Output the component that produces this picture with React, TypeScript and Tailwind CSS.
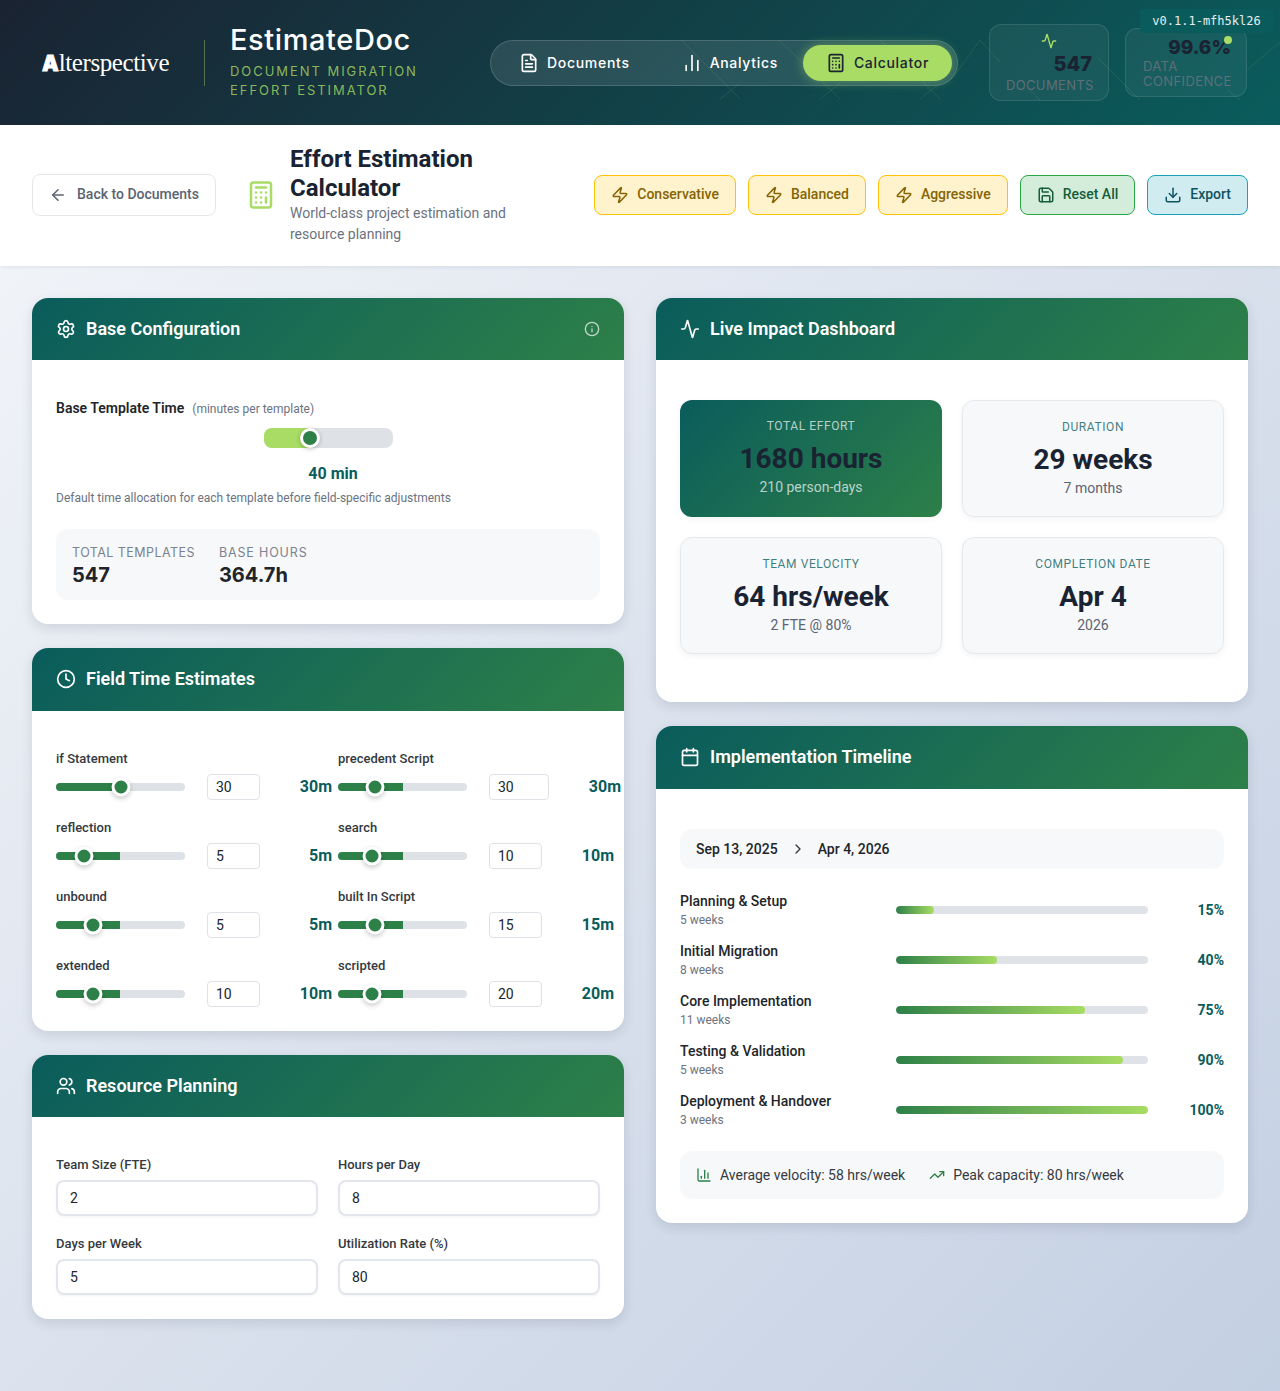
import React from "react";
import {
  Activity, ArrowLeft, Calculator, Calendar, ChartColumn, ChartNoAxesColumn, ChevronRight, Clock, Download, FileText,
  Info, Save, Settings, TrendingUp, Users, Zap,
} from "lucide-react";

function Card({ icon, title, info, headClass, children }: { icon: React.ReactNode; title: string; info?: boolean; headClass: string; children: React.ReactNode }) {
  return (
    <section className="rounded-2xl bg-white overflow-hidden shadow-[0_4px_12px_rgba(26,35,50,0.12)]">
      <div className={`flex items-center justify-between px-6 bg-[linear-gradient(135deg,#0a5c5c_0%,#2d8048_100%)] text-white ${headClass}`}>
        <div className="flex items-center gap-[10px]">
          {icon}
          <h2 className="text-[18px] font-semibold leading-6">{title}</h2>
        </div>
        {info && <Info size={16} className="text-white/70" />}
      </div>
      {children}
    </section>
  );
}

function FieldRow({ label, left, input, value, wide, right }: { label: string; left: number; input: string; value: string; wide?: boolean; right?: boolean }) {
  return (
    <div className="min-w-0">
      <div className="h-5 leading-5 text-[13px] font-medium text-[#343a40] mb-[5px]">{label}</div>
      <div className="flex items-center gap-[22px] h-[26px] w-max">
        <div className="relative w-[129px] h-2 rounded-full bg-[#dee2e6]">
          <div className={`h-2 ${right ? "w-[65px]" : "w-[64px]"} rounded-l-full bg-[#2d8048]`} />
          <span
            className="absolute top-1/2 w-[19px] h-[19px] -translate-x-1/2 -translate-y-1/2 rounded-full bg-[#2d8048] border-[3px] border-white shadow-[0_2px_5px_rgba(0,0,0,0.22)]"
            style={{ left }}
          />
        </div>
        <div className={`${wide ? "w-[60px]" : "w-[53px]"} h-[26px] rounded border border-[#dee2e6] bg-white pl-2 text-[14px] leading-[25px] text-[#212529]`}>{input}</div>
        <div className={`${wide ? "-ml-[7px] w-[57px]" : "w-[50px]"} text-right text-[16px] font-bold text-[#0a5c5c]`}>{value}</div>
      </div>
    </div>
  );
}

function ResField({ label, value }: { label: string; value: string }) {
  return (
    <div>
      <div className="h-5 leading-5 text-[13px] font-medium text-[#343a40] mb-[5px]">{label}</div>
      <div className="h-9 rounded-lg border-2 border-[#e2e6ec] bg-white px-3 text-[14px] leading-8 text-[#212529] shadow-[0_1px_3px_rgba(0,0,0,0.05)]">{value}</div>
    </div>
  );
}

function Stat({ label, value, sub, primary }: { label: string; value: string; sub: string; primary?: boolean }) {
  return (
    <div
      className={`h-[117px] rounded-xl flex flex-col items-center pt-[17px] shadow-[0_2px_6px_rgba(0,0,0,0.05)] ${
        primary
          ? "bg-[linear-gradient(135deg,#0a5c5c_0%,#2d8048_100%)]"
          : "bg-[#f7f8fa] border border-[#e5e8ec]"
      }`}
    >
      <div className={`h-[18px] leading-[18px] text-[12px] tracking-[0.6px] uppercase ${primary ? "text-white/70" : "text-[#0a5c5c]/80"}`}>{label}</div>
      <div className="mt-[6px] h-9 leading-9 text-[28px] font-bold text-[#1a2332]">{value}</div>
      <div className={`h-5 leading-5 text-[14px] ${primary ? "text-white/70" : "text-[#5b6472]"}`}>{sub}</div>
    </div>
  );
}

function Phase({ name, weeks, pct }: { name: string; weeks: string; pct: number }) {
  return (
    <div className="grid grid-cols-[216px_252px_76px] items-center h-[38px]">
      <div>
        <div className="h-5 leading-5 text-[14px] font-medium text-[#212529]">{name}</div>
        <div className="h-[18px] leading-[18px] text-[12px] text-[#6b7280]">{weeks}</div>
      </div>
      <div className="h-2 rounded-full bg-[#dfe3e8] overflow-hidden">
        <div className="h-2 rounded-full bg-[linear-gradient(90deg,#2d8048,#a8dc64)]" style={{ width: `${pct}%` }} />
      </div>
      <div className="text-right text-[14px] font-bold text-[#0a5c5c]">{pct}%</div>
    </div>
  );
}

function ToolBtn({ children, icon, tone }: { children: string; icon: React.ReactNode; tone: string }) {
  return (
    <button className={`h-10 rounded-lg border px-4 flex items-center gap-2 text-[14px] font-medium ${tone}`}>
      {icon}
      {children}
    </button>
  );
}

const amber = "bg-[#fff3cd] border-[#ffc107] text-[#856404]";

export default function App() {
  return (
    <div className="min-h-[1391px] font-[Roboto,sans-serif] bg-[linear-gradient(135deg,#f5f7fa_0%,#c3cfe2_100%)]">
      <header className="relative h-[125px] overflow-hidden bg-[linear-gradient(135deg,#1a2332_0%,#0a5c5c_100%)] px-8 flex items-center font-[Inter,sans-serif]">
        <svg className="absolute inset-0 pointer-events-none" width="1280" height="125" fill="none" stroke="#a8dc64" strokeOpacity="0.17" strokeWidth="0.7">
          <path d="M681 40l59 59M779 40l61 59M880 40l60 59M720 99l20-16M820 99l20-16M920 99l20-16M955 75l25-35M980 40l20 22M1097 57l43 43M1030 90l10 10M1228 90l12 10M1247 70l33-28" />
        </svg>
        <div className="relative flex items-center w-full">
          <div className="ml-[10px] w-[129px] flex items-baseline text-white font-['Liberation_Serif',serif] text-[25px] leading-none tracking-[-0.4px]">
            <span className="font-[Inter,sans-serif] font-black text-[21px] tracking-normal [-webkit-text-stroke:0.8px_white]">A</span>
            <span>lterspective</span>
          </div>
          <div className="ml-[33px] h-[46px] w-px bg-[#a8dc64]/40" />
          <div className="ml-[25px] w-[200px] pb-[3px]">
            <div className="text-[29px] leading-[36px] font-medium text-white tracking-[0.6px]">EstimateDoc</div>
            <div className="mt-1 text-[13px] leading-[19px] tracking-[1.95px] text-[#a8dc64]/80">DOCUMENT MIGRATION EFFORT ESTIMATOR</div>
          </div>
          <nav className="ml-[60px] w-[468px] h-[46px] rounded-full border border-white/15 bg-white/10 flex items-center pl-[28px] pr-[5px] text-[14px] font-medium tracking-[0.7px] text-white">
            <span className="flex items-center gap-[8px]"><FileText size={20} />Documents</span>
            <span className="ml-[52px] flex items-center gap-[8px]"><ChartNoAxesColumn size={20} />Analytics</span>
            <span className="ml-auto h-9 w-[149px] rounded-full bg-[#a8dc64] text-[#1a2332] flex items-center justify-center gap-[8px] shadow-[0_0_12px_rgba(168,220,100,0.45)]">
              <Calculator size={20} />Calculator
            </span>
          </nav>
          <div className="ml-[31px] w-[120px] h-[77px] rounded-xl border border-white/10 bg-white/5 px-4 pt-[8px]">
            <Activity size={16} className="mx-auto text-[#a8dc64]" />
            <div className="text-right text-[20px] font-extrabold leading-[24px] text-[#1a2332] mt-[3px]">547</div>
            <div className="text-right text-[13px] leading-[16px] tracking-[0.35px] text-[#5f6f78] mt-[1px]">DOCUMENTS</div>
          </div>
          <div className="relative ml-4 w-[122px] h-[69px] rounded-xl border border-white/10 bg-white/5 pl-[17px] pr-[15px] pt-[7px]">
            <span className="absolute right-[14px] top-[7px] w-2 h-2 rounded-full bg-[#a8dc64]" />
            <div className="text-right text-[19px] font-extrabold leading-[24px] text-[#1a2332]">99.6%</div>
            <div className="text-[13px] leading-[15px] tracking-[0.4px] text-[#5f6f78] -mt-[1px]">DATA CONFIDENCE</div>
          </div>
        </div>
        <div className="absolute right-[7px] top-[9px] h-[24px] w-[133px] rounded bg-[#0a5c5c] text-center font-['DejaVu_Sans_Mono',monospace] text-[12px] leading-[24px] text-white/90">v0.1.1-mfh5kl26</div>
      </header>

      <div className="h-[141px] bg-white px-8 pb-[2px] flex items-center justify-between shadow-[0_1px_4px_rgba(0,0,0,0.08)]">
        <div className="flex items-center">
          <button className="h-[42px] w-[184px] rounded-lg border border-[#e5e7eb] bg-white flex items-center justify-center gap-[10px] text-[14px] font-medium text-[#5b6472]">
            <ArrowLeft size={18} />Back to Documents
          </button>
          <Calculator size={30} className="ml-[30px] text-[#a8dc64]" />
          <div className="ml-[14px] w-[240px]">
            <h1 className="text-[24px] leading-[29px] font-bold text-[#1a2332]">Effort Estimation Calculator</h1>
            <p className="text-[14px] leading-[21px] text-[#6b7280]">World-class project estimation and resource planning</p>
          </div>
        </div>
        <div className="flex items-center gap-3">
          <ToolBtn tone={amber} icon={<Zap size={18} />}>Conservative</ToolBtn>
          <ToolBtn tone={amber} icon={<Zap size={18} />}>Balanced</ToolBtn>
          <ToolBtn tone={amber} icon={<Zap size={18} />}>Aggressive</ToolBtn>
          <ToolBtn tone="bg-[#d4edda] border-[#28a745] text-[#155d3b]" icon={<Save size={18} />}>Reset All</ToolBtn>
          <ToolBtn tone="bg-[#d1ecf1] border-[#17a2b8] text-[#0c5460]" icon={<Download size={18} />}>Export</ToolBtn>
        </div>
      </div>

      <main className="grid grid-cols-2 gap-8 p-8 items-start">
        <div className="flex flex-col gap-6">
          <Card icon={<Settings size={20} />} title="Base Configuration" info headClass="h-[62px]">
            <div className="px-6 pt-[38px] pb-6">
              <div className="h-5 leading-5 flex items-baseline gap-2">
                <span className="text-[14px] font-semibold text-[#212529]">Base Template Time</span>
                <span className="text-[12px] text-[#6b7280]">(minutes per template)</span>
              </div>
              <div className="relative mx-auto mt-[10px] w-[129px] h-5 rounded-lg bg-[#dee2e6]">
                <div className="h-5 w-[46px] rounded-l-lg bg-[#a8dc64]" />
                <span className="absolute left-[46px] top-1/2 w-[20px] h-[20px] -translate-x-1/2 -translate-y-1/2 rounded-full bg-[#2d8048] border-[3px] border-white shadow-[0_1px_4px_rgba(0,0,0,0.25)]" />
              </div>
              <div className="mt-[14px] pl-[10px] text-center text-[16px] leading-6 font-bold text-[#0a5c5c]">40 min</div>
              <p className="mt-[2px] text-[12px] leading-5 text-[#6b7280]">Default time allocation for each template before field-specific adjustments</p>
              <div className="mt-[21px] h-[71px] rounded-xl bg-[#f7f8fa] px-4 pt-[16px] flex gap-6 font-[Inter,sans-serif]">
                <div>
                  <div className="text-[12.5px] leading-[16px] tracking-[0.45px] text-[#7b8290]">TOTAL TEMPLATES</div>
                  <div className="mt-[2px] text-[20px] leading-[24px] font-bold text-[#212529]">547</div>
                </div>
                <div>
                  <div className="text-[12.5px] leading-[16px] tracking-[0.85px] text-[#7b8290]">BASE HOURS</div>
                  <div className="mt-[2px] text-[20px] leading-[24px] font-bold text-[#212529]">364.7h</div>
                </div>
              </div>
            </div>
          </Card>

          <Card icon={<Clock size={20} />} title="Field Time Estimates" headClass="h-[63px] pb-px">
            <div className="px-6 pt-[38px] pb-6 grid grid-cols-2 gap-x-5 gap-y-[18px]">
              <FieldRow label="if Statement" left={65} input="30" value="30m" />
              <FieldRow right label="precedent Script" left={37} input="30" value="30m" wide />
              <FieldRow label="reflection" left={28} input="5" value="5m" />
              <FieldRow right label="search" left={34} input="10" value="10m" />
              <FieldRow label="unbound" left={37} input="5" value="5m" />
              <FieldRow right label="built In Script" left={37} input="15" value="15m" />
              <FieldRow label="extended" left={37} input="10" value="10m" />
              <FieldRow right label="scripted" left={34} input="20" value="20m" />
            </div>
          </Card>

          <Card icon={<Users size={20} />} title="Resource Planning" headClass="h-[62px]">
            <div className="px-6 pt-[38px] pb-6 grid grid-cols-2 gap-x-5 gap-y-[18px]">
              <ResField label="Team Size (FTE)" value="2" />
              <ResField label="Hours per Day" value="8" />
              <ResField label="Days per Week" value="5" />
              <ResField label="Utilization Rate (%)" value="80" />
            </div>
          </Card>
        </div>

        <div className="flex flex-col gap-6">
          <Card icon={<Activity size={20} />} title="Live Impact Dashboard" headClass="h-[62px]">
            <div className="px-6 pt-10 pb-12 grid grid-cols-2 gap-5">
              <Stat primary label="Total Effort" value="1680 hours" sub="210 person-days" />
              <Stat label="Duration" value="29 weeks" sub="7 months" />
              <Stat label="Team Velocity" value="64 hrs/week" sub="2 FTE @ 80%" />
              <Stat label="Completion Date" value="Apr 4" sub="2026" />
            </div>
          </Card>

          <Card icon={<Calendar size={20} />} title="Implementation Timeline" headClass="h-[63px] pb-px">
            <div className="px-6 pt-10 pb-6">
              <div className="h-10 rounded-xl bg-[#f7f8fa] px-4 flex items-center text-[14px] font-medium text-[#212529]">
                <span>Sep 13, 2025</span>
                <ChevronRight size={16} className="ml-3 text-[#343a40]" />
                <span className="ml-3">Apr 4, 2026</span>
              </div>
              <div className="mt-[22px] flex flex-col gap-3">
                <Phase name="Planning & Setup" weeks="5 weeks" pct={15} />
                <Phase name="Initial Migration" weeks="8 weeks" pct={40} />
                <Phase name="Core Implementation" weeks="11 weeks" pct={75} />
                <Phase name="Testing & Validation" weeks="5 weeks" pct={90} />
                <Phase name="Deployment & Handover" weeks="3 weeks" pct={100} />
              </div>
              <div className="mt-[22px] h-12 rounded-xl bg-[#f7f8fa] px-4 flex items-center gap-6 text-[14px] text-[#343a40]">
                <span className="flex items-center gap-2"><ChartColumn size={16} className="text-[#2d8048]" />Average velocity: 58 hrs/week</span>
                <span className="flex items-center gap-2"><TrendingUp size={16} className="text-[#2d8048]" />Peak capacity: 80 hrs/week</span>
              </div>
            </div>
          </Card>
        </div>
      </main>
    </div>
  );
}
